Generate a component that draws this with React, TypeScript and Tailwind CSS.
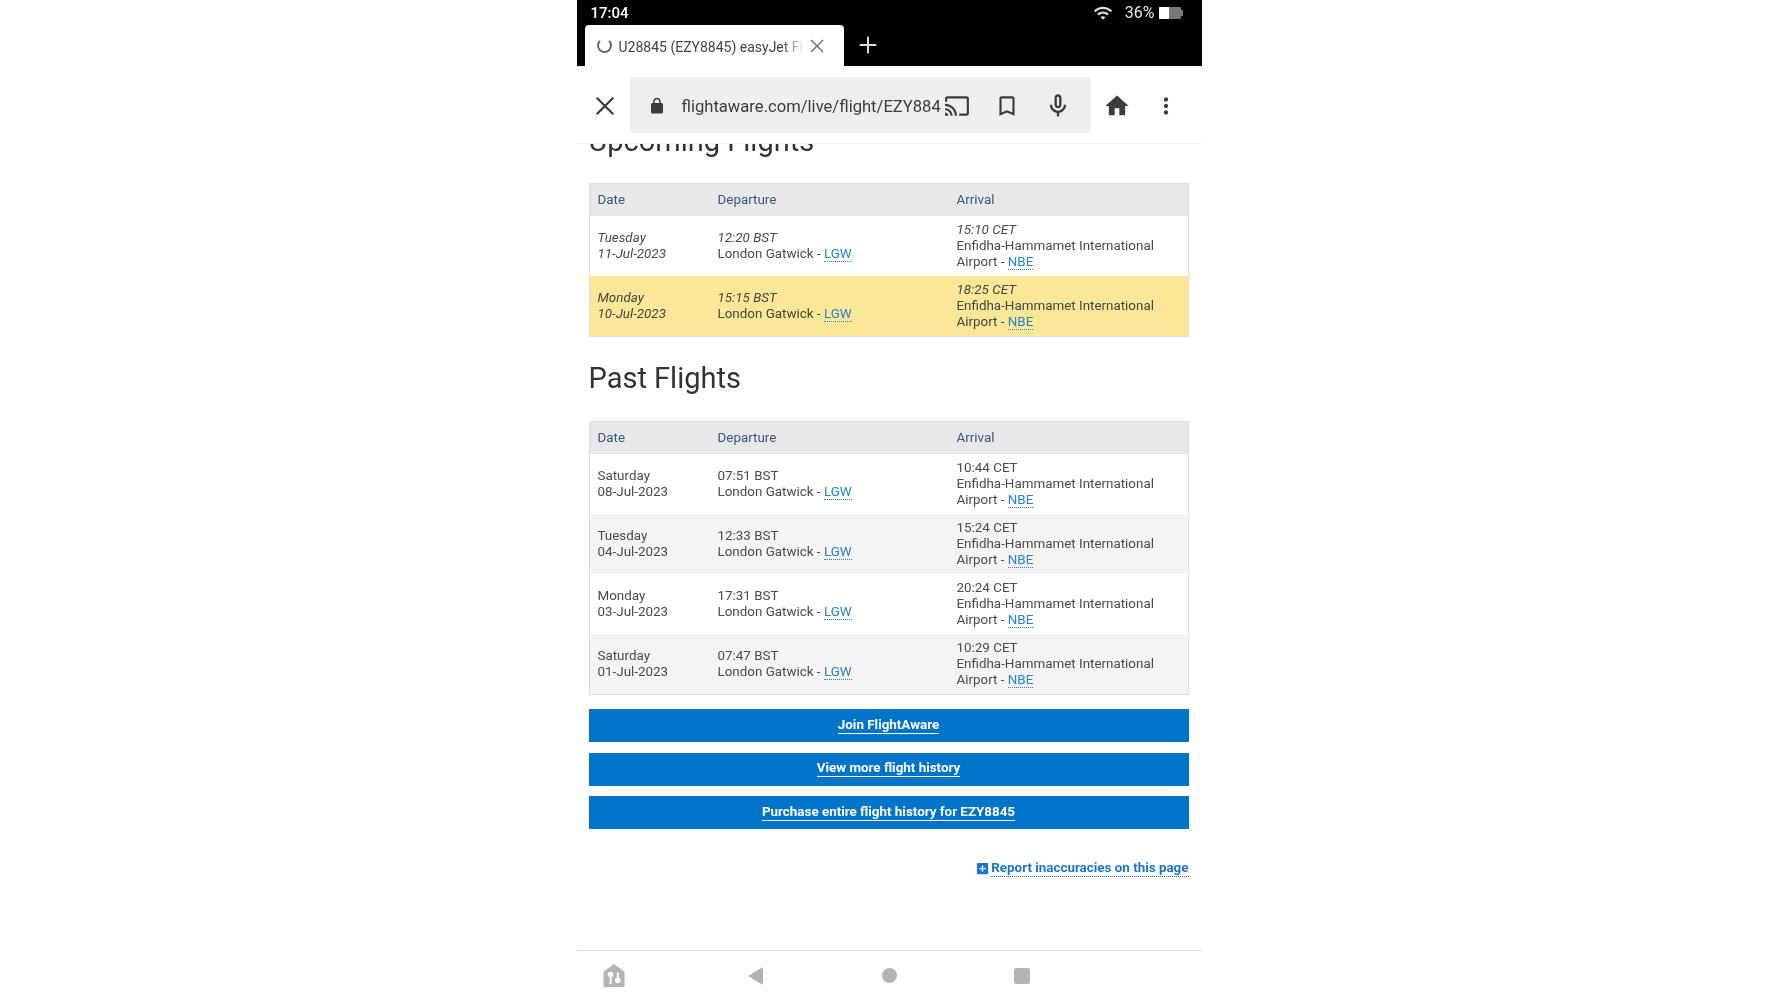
import { ReactNode } from "react";

type Flight = {
  day: string;
  date: string;
  dep: string;
  arr: string;
};

const upcoming: Flight[] = [
  { day: "Tuesday", date: "11-Jul-2023", dep: "12:20 BST", arr: "15:10 CET" },
  { day: "Monday", date: "10-Jul-2023", dep: "15:15 BST", arr: "18:25 CET" },
];

const past: Flight[] = [
  { day: "Saturday", date: "08-Jul-2023", dep: "07:51 BST", arr: "10:44 CET" },
  { day: "Tuesday", date: "04-Jul-2023", dep: "12:33 BST", arr: "15:24 CET" },
  { day: "Monday", date: "03-Jul-2023", dep: "17:31 BST", arr: "20:24 CET" },
  { day: "Saturday", date: "01-Jul-2023", dep: "07:47 BST", arr: "10:29 CET" },
];

function Icon({ d, className }: { d: string; className: string }) {
  return (
    <svg viewBox="0 0 24 24" className={className} fill="currentColor" fillRule="evenodd">
      <path d={d} />
    </svg>
  );
}

function Code({ children }: { children: ReactNode }) {
  return (
    <span className="text-[#2a84c8] border-b border-dotted border-[#2a84c8]">
      {children}
    </span>
  );
}

function TableHead() {
  return (
    <div className="flex h-[32px] items-center bg-[#e8e8e8] text-[#37587f]">
      <div className="w-[128px] pl-[8px]">Date</div>
      <div className="w-[239px]">Departure</div>
      <div>Arrival</div>
    </div>
  );
}

function Row({ f, italic, className }: { f: Flight; italic?: boolean; className: string }) {
  const em = italic ? "italic" : "";
  return (
    <div className={"flex h-[60px] items-center " + className}>
      <div className={"w-[128px] pl-[8px] " + em}>
        <div>{f.day}</div>
        <div>{f.date}</div>
      </div>
      <div className="w-[239px]">
        <div className={em}>{f.dep}</div>
        <div>
          London Gatwick - <Code>LGW</Code>
        </div>
      </div>
      <div>
        <div className={em}>{f.arr}</div>
        <div>Enfidha-Hammamet International</div>
        <div>
          Airport - <Code>NBE</Code>
        </div>
      </div>
    </div>
  );
}

function Button({ label }: { label: string }) {
  return (
    <div className="flex h-[33px] items-center justify-center bg-[#0074c8] pb-[1px] font-bold text-white">
      <span className="border-b border-white leading-[16px]">{label}</span>
    </div>
  );
}

export default function App() {
  return (
    <div className="min-h-[1000px] bg-white font-['Roboto',sans-serif]">
      <div className="mx-auto flex h-[1000px] w-[625px] flex-col overflow-hidden blur-[0.4px]">
        {/* status bar + tab strip */}
        <div className="h-[66px] shrink-0 bg-black text-white">
          <div className="flex h-[25px] items-center pl-[14px] pr-[19px] pt-[1px] text-[15px]">
            <span className="font-medium">17:04</span>
            <Icon
              className="ml-auto h-[20px] w-[20px] text-[#ddd]"
              d="M1 9l2 2c4.97-4.97 13.03-4.97 18 0l2-2C16.93 2.93 7.08 2.93 1 9zm8 8l3 3 3-3c-1.65-1.66-4.34-1.66-6 0zm-4-4l2 2c2.76-2.76 7.24-2.76 10 0l2-2C15.14 9.14 8.87 9.14 5 13z"
            />
            <span className="ml-[12px] text-[16px] text-[#e8e8e8]">36%</span>
            <div className="ml-[4px] flex h-[12px] w-[22px] overflow-hidden rounded-[1px] bg-[#777]">
              <div className="w-[10px] bg-white" />
            </div>
            <div className="h-[6px] w-[2px] bg-[#777]" />
          </div>
          <div className="flex h-[41px] items-center pl-[8px]">
            <div className="flex h-full w-[259px] items-center rounded-t-[4px] bg-white pl-[12px] text-[#444]">
              <div className="h-[15px] w-[15px] rounded-full border-2 border-[#666] border-t-transparent" />
              <div className="ml-[7px] mt-[3px] w-[186px] overflow-hidden whitespace-nowrap text-[14px] [mask-image:linear-gradient(to_right,black_88%,transparent)]">
                U28845 (EZY8845) easyJet Fl
              </div>
              <svg viewBox="0 0 24 24" className="ml-[4px] h-[16px] w-[16px] text-[#666]" fill="none" stroke="currentColor" strokeWidth="2">
                <path d="M3 3l18 18M21 3L3 21" />
              </svg>
            </div>
            <svg viewBox="0 0 24 24" className="mb-[2px] ml-[14px] h-[20px] w-[20px] text-[#ddd]" fill="none" stroke="currentColor" strokeWidth="2.4">
              <path d="M12 2v20M2 12h20" />
            </svg>
          </div>
        </div>

        {/* toolbar */}
        <div className="flex h-[78px] shrink-0 items-center border-b border-[#efefef] bg-white text-[#3c3c3c]">
          <div className="flex w-[53px] justify-center pl-[3px] pt-[3px]">
            <svg viewBox="0 0 24 24" className="h-[22px] w-[22px]" fill="none" stroke="currentColor" strokeWidth="2.4">
              <path d="M3 3l18 18M21 3L3 21" />
            </svg>
          </div>
          <div className="flex h-[56px] w-[461px] items-center rounded-[2px] bg-[#eeeeee] pt-[3px]">
            <Icon
              className="ml-[18px] h-[18px] w-[18px]"
              d="M18 8h-1V6c0-2.76-2.24-5-5-5S7 3.24 7 6v2H6c-1.1 0-2 .9-2 2v10c0 1.1.9 2 2 2h12c1.1 0 2-.9 2-2V10c0-1.1-.9-2-2-2zM9 8V6c0-1.66 1.34-3 3-3s3 1.34 3 3v2H9z"
            />
            <div className="ml-[16px] mt-[2px] w-[261px] overflow-hidden whitespace-nowrap text-[16.6px]">
              flightaware.com/live/flight/EZY884
            </div>
            <Icon
              className="ml-[1px] h-[26px] w-[26px]"
              d="M21 3H3c-1.1 0-2 .9-2 2v3h2V5h18v14h-7v2h7c1.1 0 2-.9 2-2V5c0-1.1-.9-2-2-2zM1 18v3h3c0-1.66-1.34-3-3-3zm0-4v2c2.76 0 5 2.24 5 5h2c0-3.87-3.13-7-7-7zm0-4v2c4.97 0 9 4.03 9 9h2c0-6.08-4.93-11-11-11z"
            />
            <Icon
              className="ml-[24px] h-[26px] w-[26px]"
              d="M17 3H7c-1.1 0-1.99.9-1.99 2L5 21l7-3 7 3V5c0-1.1-.9-2-2-2zm0 15l-5-2.18L7 18V5h10v13z"
            />
            <Icon
              className="ml-[24px] h-[28px] w-[28px]"
              d="M12 14c1.66 0 3-1.34 3-3V5c0-1.66-1.34-3-3-3S9 3.34 9 5v6c0 1.66 1.34 3 3 3zm-1-9c0-.55.45-1 1-1s1 .45 1 1v6c0 .55-.45 1-1 1s-1-.45-1-1V5zm6 6c0 2.76-2.24 5-5 5s-5-2.24-5-5H5c0 3.53 2.61 6.43 6 6.92V21h2v-3.08c3.39-.49 6-3.39 6-6.92h-2z"
            />
          </div>
          <div className="flex items-center pt-[2px]">
            <Icon className="ml-[12px] h-[28px] w-[28px]" d="M10 20v-6h4v6h5v-8h3L12 3 2 12h3v8z" />
            <Icon
              className="ml-[22px] h-[26px] w-[26px]"
              d="M12 8c1.1 0 2-.9 2-2s-.9-2-2-2-2 .9-2 2 .9 2 2 2zm0 2c-1.1 0-2 .9-2 2s.9 2 2 2 2-.9 2-2-.9-2-2-2zm0 6c-1.1 0-2 .9-2 2s.9 2 2 2 2-.9 2-2-.9-2-2-2z"
            />
          </div>
        </div>

        {/* page */}
        <div className="h-[806px] shrink-0 overflow-hidden bg-white pl-[12px] pr-[13px] text-[13.4px] leading-[15.7px] text-[#4a4a4a]">
          <h2 className="mt-[-21px] h-[60px] text-[29px] leading-[36px] text-[#333]">Upcoming Flights</h2>
          <div className="border border-[#dddddd]">
            <TableHead />
            {upcoming.map((f, i) => (
              <Row key={f.date} f={f} italic className={i === 1 ? "bg-[#fae797] text-[#444]" : "bg-white"} />
            ))}
          </div>
          <h2 className="flex h-[84px] items-center text-[29px] text-[#333]">Past Flights</h2>
          <div className="border border-[#dddddd]">
            <TableHead />
            {past.map((f, i) => (
              <Row key={f.date} f={f} className={i % 2 ? "bg-[#f4f4f4]" : "bg-white"} />
            ))}
          </div>
          <div className="mt-[14px] flex flex-col gap-[10.5px]">
            <Button label="Join FlightAware" />
            <Button label="View more flight history" />
            <Button label="Purchase entire flight history for EZY8845" />
          </div>
          <div className="mt-[31px] flex items-center justify-end font-bold text-[#1a78c2]">
            <Icon
              className="mr-[1px] h-[15px] w-[15px]"
              d="M19 3H5c-1.1 0-2 .9-2 2v14c0 1.1.9 2 2 2h14c1.1 0 2-.9 2-2V5c0-1.1-.9-2-2-2zm-2 10h-4v4h-2v-4H7v-2h4V7h2v4h4v2z"
            />
            <span className="border-b border-dotted border-[#1a78c2]">Report inaccuracies on this page</span>
          </div>
        </div>

        {/* android nav */}
        <div className="flex h-[50px] shrink-0 items-center border-t border-[#dddddd] bg-white text-[#b4b4b4]">
          <svg viewBox="0 0 22 24" className="ml-[26px] h-[23px] w-[22px]" fill="currentColor">
            <path d="M11 0L22 8v15a1 1 0 0 1-1 1H1a1 1 0 0 1-1-1V8z" />
            <circle cx="7.5" cy="11" r="3" fill="#fff" />
            <rect x="6.5" y="12" width="2" height="9" fill="#fff" />
            <circle cx="15" cy="17" r="3" fill="#fff" />
            <rect x="14" y="9" width="2" height="7" fill="#fff" />
          </svg>
          <div className="ml-[123px] h-0 w-0 border-y-[9px] border-r-[15px] border-y-transparent border-r-[#b4b4b4]" />
          <div className="ml-[119px] h-[15px] w-[15px] rounded-full bg-[#b4b4b4]" />
          <div className="ml-[117px] h-[16px] w-[16px] rounded-[2px] bg-[#b4b4b4]" />
        </div>
      </div>
    </div>
  );
}
